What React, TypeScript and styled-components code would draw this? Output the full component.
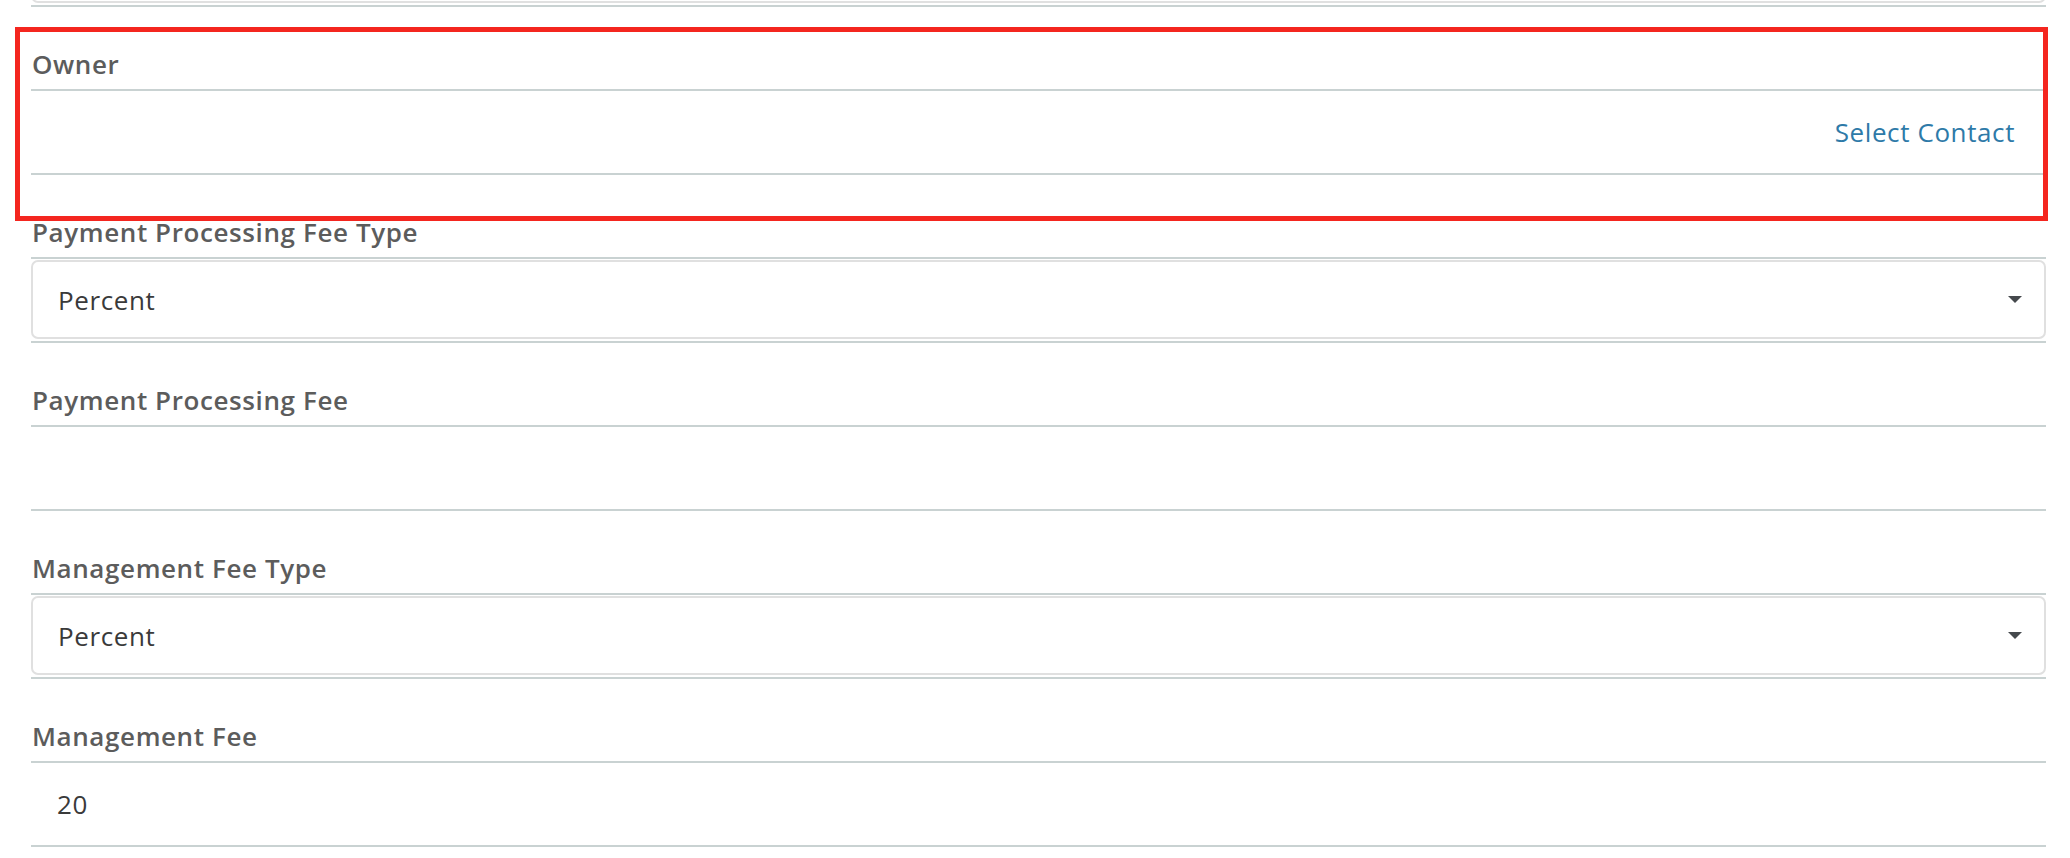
import React from "react";
import styled, { createGlobalStyle } from "styled-components";

const GlobalStyle = createGlobalStyle`
  html, body {
    margin: 0;
    padding: 0;
    background: #ffffff;
    overflow: hidden;
  }
  body {
    font-family: "Open Sans", "Liberation Sans", sans-serif;
  }
`;

const Page = styled.div`
  padding: 0 24px 0 31px;
  margin-top: -77px;
`;

const Group = styled.div<{ $highlight?: boolean }>`
  position: relative;
  ${(p) =>
    p.$highlight
      ? `
  &::after {
    content: "";
    position: absolute;
    top: 20px;
    bottom: -46px;
    left: -16px;
    right: -2px;
    border: 5px solid #f4261f;
    pointer-events: none;
  }`
      : ""}
`;

const Row = styled.div`
  box-sizing: border-box;
  height: 84px;
  border-bottom: 2px solid #c9d2d2;
  display: flex;
`;

const LabelRow = styled(Row)`
  align-items: flex-end;
  padding: 0 0 10px 1px;
`;

const Label = styled.label`
  font-size: 26px;
  line-height: 30px;
  font-weight: 600;
  letter-spacing: 0.6px;
  color: #5c5c5c;
`;

const ValueRow = styled(Row)<{ $align?: "start" | "end" }>`
  align-items: center;
  justify-content: ${(p) => (p.$align === "end" ? "flex-end" : "flex-start")};
  padding: 0 31px 0 26px;
`;

const Value = styled.span`
  font-size: 26px;
  line-height: 30px;
  letter-spacing: 0.6px;
  color: #3a3a3a;
`;

const LinkText = styled.a`
  font-size: 26px;
  line-height: 30px;
  letter-spacing: 0.6px;
  color: #2e7aa8;
  text-decoration: none;
  cursor: pointer;
`;

const SelectRow = styled(Row)`
  align-items: flex-start;
  padding-top: 1px;
`;

const SelectBox = styled.div`
  box-sizing: border-box;
  flex: 1;
  height: 79px;
  border: 2px solid #e0e0e0;
  border-radius: 7px;
  display: flex;
  align-items: center;
  justify-content: space-between;
  padding: 0 22px 0 25px;
`;

const Caret = styled.span`
  width: 0;
  height: 0;
  border-left: 7px solid transparent;
  border-right: 7px solid transparent;
  border-top: 7px solid #45494d;
`;

const Select: React.FC<{ value: string }> = ({ value }) => (
  <SelectRow>
    <SelectBox>
      <Value>{value}</Value>
      <Caret />
    </SelectBox>
  </SelectRow>
);

export default function App() {
  return (
    <>
      <GlobalStyle />
      <Page>
        <Group>
          <Select value="" />
        </Group>
        <Group $highlight>
          <LabelRow>
            <Label>Owner</Label>
          </LabelRow>
          <ValueRow $align="end">
            <LinkText>Select Contact</LinkText>
          </ValueRow>
        </Group>
        <Group>
          <LabelRow>
            <Label>Payment Processing Fee Type</Label>
          </LabelRow>
          <Select value="Percent" />
        </Group>
        <Group>
          <LabelRow>
            <Label>Payment Processing Fee</Label>
          </LabelRow>
          <ValueRow>
            <Value></Value>
          </ValueRow>
        </Group>
        <Group>
          <LabelRow>
            <Label>Management Fee Type</Label>
          </LabelRow>
          <Select value="Percent" />
        </Group>
        <Group>
          <LabelRow>
            <Label>Management Fee</Label>
          </LabelRow>
          <ValueRow>
            <Value>20</Value>
          </ValueRow>
        </Group>
      </Page>
    </>
  );
}
